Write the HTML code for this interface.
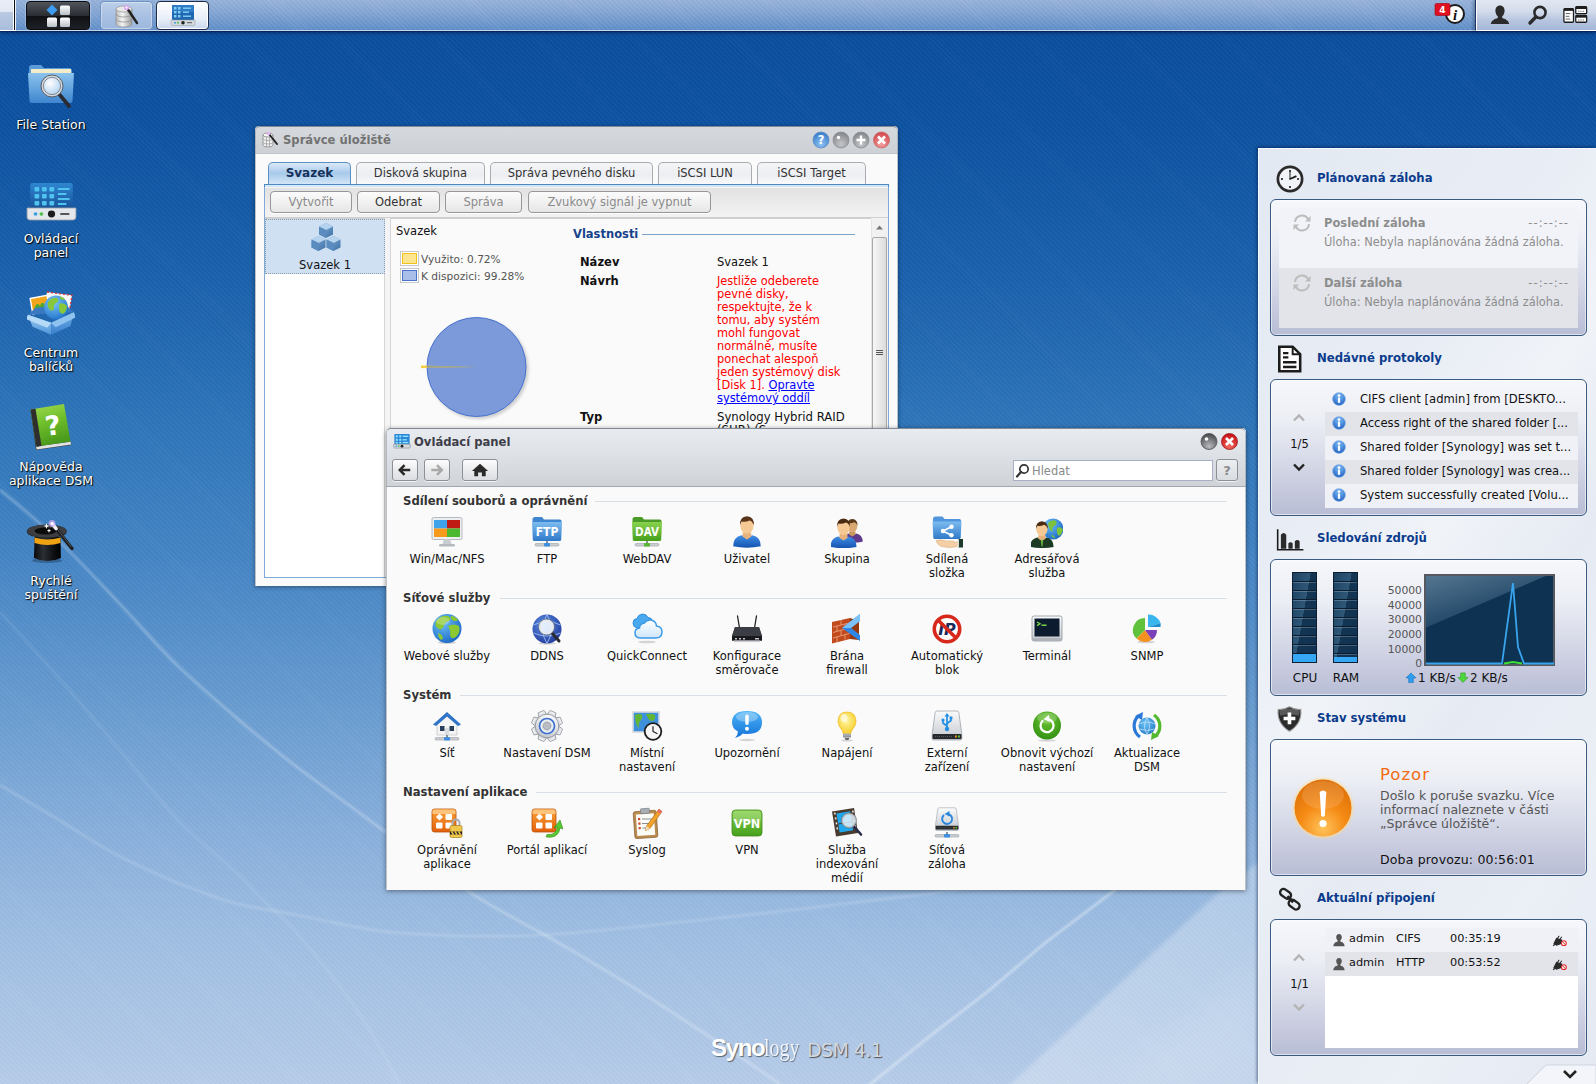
<!DOCTYPE html>
<html lang="cs"><head><meta charset="utf-8"><title>Synology DSM 4.1</title>
<style>
*{box-sizing:border-box;margin:0;padding:0}
html,body{width:1596px;height:1084px;overflow:hidden}
body{font-family:"DejaVu Sans","Liberation Sans",sans-serif;font-size:11.5px;color:#111;position:relative;
background:linear-gradient(180deg,#0a4c9c 0px,#0d52a1 120px,#1a61ad 280px,#2f76ba 430px,#4585c5 560px,#679bd0 700px,#86aedb 820px,#a0bfe3 940px,#b6cce9 1084px);}
.abs{position:absolute}
#stripes{left:0;top:0;width:1596px;height:1084px;background:repeating-linear-gradient(45deg,rgba(255,255,255,0.03) 0,rgba(255,255,255,0.03) 1.5px,rgba(0,0,0,0.015) 1.5px,rgba(0,0,0,0.015) 3.5px)}
#bgsvg{left:0;top:0}
/* taskbar */
#taskbar{left:0;top:0;width:1596px;height:31px;background:linear-gradient(180deg,#97b2da 0,#84a6d4 40%,#6c97cd 80%,#5f8fc8 100%);border-bottom:1px solid #c3d4ec;box-shadow:0 1px 0 #05265e,0 2px 3px rgba(0,20,70,.55)}
#tbstripes{left:0;top:0;width:1596px;height:30px;background:repeating-linear-gradient(45deg,rgba(255,255,255,0.05) 0,rgba(255,255,255,0.05) 1.5px,rgba(0,0,0,0.02) 1.5px,rgba(0,0,0,0.02) 3.5px)}
#tb-left{left:0;top:0;width:16px;height:31px;background:linear-gradient(180deg,#e8edf6 0,#e3e9f3 38%,#b9c9e2 42%,#a9bddc 100%);border-right:1px solid #eef3fa;border-bottom:1px solid #fff;box-shadow:inset -1px 0 0 #0a0d1c,inset -2px 0 0 #fff}
#tb-right{left:1475px;top:0;width:121px;height:31px;background:linear-gradient(180deg,#e2e8f2 0,#d4ddeb 35%,#b5c4df 70%,#a4b7d8 100%);border-left:1px solid #1c3560;border-bottom:1px solid #fff;box-shadow:inset 1px 0 0 #fff,-2px 0 3px rgba(0,20,60,.3)}
.tbbtn{top:1px;height:29px;border-radius:4px}
/* desktop icons */
.dicon{width:100px;text-align:center;color:#fff;font-size:12.5px;line-height:14px;text-shadow:1px 1px 1px #000,0 0 2px rgba(0,0,0,.6)}
/* windows */
.win{border-radius:5px 5px 0 0;box-shadow:0 1px 4px rgba(0,0,0,.4)}
.win::after{content:'';position:absolute;left:0;top:0;right:0;bottom:0;border:1px solid rgba(125,133,146,.95);border-bottom:none;border-left-color:rgba(150,157,168,.6);border-right-color:rgba(150,157,168,.6);border-radius:5px 5px 0 0;pointer-events:none}
.wtitle{left:0;top:0;right:0;height:28px;border-radius:4px 4px 0 0;font-weight:bold;font-size:11.600px}
.wb{width:17px;height:17px;border-radius:50%;top:5px}
</style></head><body>
<div id="stripes" class="abs"></div>
<svg id="bgsvg" class="abs" width="1596" height="1084" viewBox="0 0 1596 1084">
<defs><filter id="bl"><feGaussianBlur stdDeviation="1.2"/></filter><filter id="bl2"><feGaussianBlur stdDeviation="14"/></filter></defs>
<g fill="none" stroke="#fff" filter="url(#bl)">
<path d="M0,490 C10,498 39,522 59,541 C79,560 99,582 119,603 C139,624 158,647 178,666 C198,685 218,702 238,719 C258,736 277,752 297,767 C317,782 342,800 357,811 C372,822 366,818 386,832 C406,846 446,877 474,895 C502,913 526,924 552,939 C578,954 605,970 631,986 C657,1002 685,1021 710,1037 C735,1053 768,1076 780,1084" stroke-opacity=".3" stroke-width="2.400"/>
<path d="M0,785 C10,791 39,808 59,820 C79,832 99,846 119,856 C139,866 158,875 178,883 C198,891 218,899 238,904 C258,909 277,911 297,915 C317,919 340,924 357,927 C374,930 380,932 400,933 C420,934 447,936 474,936 C501,936 521,937 560,934 C599,931 662,924 710,919 C758,914 810,908 850,903 C890,898 905,897 947,891 C989,885 1074,869 1100,865" stroke-opacity=".2" stroke-width="2.200"/>
<path d="M0,612 C10,623 39,655 59,678 C79,701 99,725 119,749 C139,773 158,799 178,820 C198,841 223,860 238,874 C253,888 257,894 267,904 C277,914 282,915 297,933 C312,951 340,985 357,1010 C374,1035 393,1072 400,1084" stroke-opacity=".1" stroke-width="2.500"/>
</g>
<g filter="url(#bl2)" fill="#fff">
<path d="M1110,1084 L1260,960 L1260,1084Z" fill-opacity=".1"/>
</g>
<defs><linearGradient id="band" x1="0" y1="0" x2="1" y2="1"><stop offset="0" stop-color="#fff" stop-opacity=".36"/><stop offset="1" stop-color="#fff" stop-opacity=".15"/></linearGradient><filter id="bl3"><feGaussianBlur stdDeviation="2"/></filter></defs>
<path d="M1004,1090 L1218,893 L1300,830 L1300,1090Z" fill="url(#band)" filter="url(#bl3)"/>
<path d="M868,1086 L930,1036 L987,992 L1045,943 L1111,893 L1180,840" fill="none" stroke="#fff" stroke-opacity=".4" stroke-width="2.600" filter="url(#bl)"/>

</svg>
<!-- TASKBAR -->
<div id="taskbar" class="abs"></div><div id="tbstripes" class="abs"></div>
<div id="tb-left" class="abs"></div>
<div id="tb-right" class="abs"></div>
<div class="abs tbbtn" style="left:26px;width:64px;background:linear-gradient(180deg,#51555c 0,#2a2d32 50%,#0e1013 51%,#1d2025 100%);border:1px solid #0a0c10;box-shadow:0 0 0 1px rgba(255,255,255,.25)">
<svg class="abs" style="left:18px;top:2px" width="28" height="25" viewBox="0 0 28 25">
<defs><linearGradient id="wsq" x1="0" y1="0" x2="0" y2="1"><stop offset="0" stop-color="#fff"/><stop offset="1" stop-color="#b9c0c8"/></linearGradient></defs>
<path d="M7,0.5 L12.5,6 L7,11.5 L1.5,6Z" fill="#3d9cf0"/>
<rect x="15" y="1.5" width="10" height="9.5" rx="1.5" fill="url(#wsq)"/>
<rect x="2" y="13.5" width="10" height="9.5" rx="1.5" fill="url(#wsq)"/>
<rect x="15" y="13.5" width="10" height="9.5" rx="1.5" fill="url(#wsq)"/>
</svg></div>
<div class="abs tbbtn" style="left:100px;width:53px;background:linear-gradient(180deg,#bccfe9,#a9c1e3 50%,#9db8de);border:1px solid #6f93c4;box-shadow:inset 0 0 0 1px rgba(255,255,255,.35)">
<svg class="abs" style="left:12px;top:1px" width="28" height="26" viewBox="0 0 28 26">
<defs><linearGradient id="cyl" x1="0" y1="0" x2="1" y2="0"><stop offset="0" stop-color="#b9b9b9"/><stop offset=".4" stop-color="#f4f4f4"/><stop offset="1" stop-color="#9a9a9a"/></linearGradient></defs>
<path d="M3,6 v15 a8,3 0 0 0 16,0 v-15z" fill="url(#cyl)" stroke="#8a8a8a" stroke-width=".6"/>
<ellipse cx="11" cy="6" rx="8" ry="3" fill="#e9e9e9" stroke="#8a8a8a" stroke-width=".6"/>
<path d="M3,11 a8,3 0 0 0 16,0 M3,16 a8,3 0 0 0 16,0" fill="none" stroke="#8a8a8a" stroke-width=".7"/>
<path d="M14,5 L24,20" stroke="#222" stroke-width="2.4" stroke-linecap="round"/>
<circle cx="13.5" cy="4.5" r="2.6" fill="#d9a6f2"/><circle cx="13.5" cy="4.5" r="1.1" fill="#fff"/>
</svg></div>
<div class="abs tbbtn" style="left:156px;width:53px;background:linear-gradient(180deg,#fdfeff,#e9eff8 60%,#c9d8ee);border:1px solid #1c2c4a;box-shadow:inset 0 0 0 1px #fff">
<svg class="abs" style="left:13px;top:2px" width="26" height="24" viewBox="0 0 26 24">
<rect x="2" y="1" width="22" height="15" rx="1" fill="#1f67b0"/>
<rect x="2" y="1" width="22" height="7" rx="1" fill="#2f7cc4"/>
<g fill="#7fd0f5"><rect x="4" y="3" width="2.5" height="2.5"/><rect x="8" y="3" width="2.5" height="2.5"/><rect x="4" y="7" width="2.5" height="2.5"/><rect x="8" y="7" width="2.5" height="2.5"/><rect x="4" y="11" width="2.5" height="2.5"/><rect x="8" y="11" width="2.5" height="2.5"/><rect x="13" y="3.5" width="8" height="1.4"/><rect x="13" y="7.5" width="6" height="1.4"/><rect x="13" y="11.5" width="8" height="1.4"/></g>
<path d="M1,16 h24 v4 a1.5,1.5 0 0 1 -1.5,1.5 h-21 a1.5,1.5 0 0 1 -1.5,-1.5z" fill="#d5d9de" stroke="#8e959d" stroke-width=".5"/>
<circle cx="13" cy="18.7" r="1.8" fill="#222"/><circle cx="5" cy="18.7" r="1" fill="#3a9de0"/><circle cx="8" cy="18.7" r="1" fill="#4cc04c"/><rect x="17" y="18.2" width="5" height="1" fill="#555"/>
</svg></div>
<!-- notification -->
<svg class="abs" style="left:1434px;top:2px" width="36" height="26" viewBox="0 0 36 26">
<circle cx="21" cy="12" r="9" fill="#fff" stroke="#1b1b1b" stroke-width="2"/>
<text x="21" y="17.5" text-anchor="middle" font-family="Liberation Serif,serif" font-style="italic" font-weight="bold" font-size="15" fill="#111">i</text>
<rect x="1" y="1.5" width="15" height="12" rx="1.5" fill="#e01020" stroke="#a00010" stroke-width=".6"/>
<text x="8.5" y="10.6" text-anchor="middle" font-family="DejaVu Sans,sans-serif" font-weight="bold" font-size="9" fill="#fff">4</text>
</svg>
<!-- user -->
<svg class="abs" style="left:1488px;top:3px" width="24" height="24" viewBox="0 0 24 24"><path d="M12,2.5 c3,0 4.6,2.3 4.6,5.2 c0,2.4 -1.1,4.6 -2.4,5.6 v1.6 c3,1 6.3,2.2 7,6 h-18.4 c0.7,-3.8 4,-5 7,-6 v-1.6 c-1.300,-1 -2.400,-3.200 -2.400,-5.600 c0,-2.900 1.600,-5.200 4.600,-5.200z" fill="#2b2b2b"/></svg>
<!-- search -->
<svg class="abs" style="left:1526px;top:3px" width="24" height="24" viewBox="0 0 24 24"><circle cx="14" cy="9.500" r="5.600" fill="none" stroke="#2b2b2b" stroke-width="2.600"/><path d="M9.800,14 L4,20" stroke="#2b2b2b" stroke-width="3.400" stroke-linecap="round"/></svg>
<!-- widgets -->
<svg class="abs" style="left:1563px;top:5px" width="25.500" height="19" viewBox="0 0 28 20">
<rect x="1" y="3.500" width="10.500" height="15" rx="1" fill="#fff" stroke="#1d1d1d" stroke-width="1.400"/><rect x="1" y="3.500" width="10.500" height="2.500" fill="#1d1d1d"/>
<path d="M3,9 h5 M3,12 h4 M3,15 h5" stroke="#555" stroke-width="1"/>
<rect x="14" y="1.500" width="12" height="7.500" rx="1" fill="#fff" stroke="#1d1d1d" stroke-width="1.400"/><rect x="14" y="1.500" width="12" height="2.500" fill="#1d1d1d"/>
<rect x="14" y="11" width="12" height="7.500" rx="1" fill="#fff" stroke="#1d1d1d" stroke-width="1.400"/><rect x="14" y="11" width="12" height="2.500" fill="#1d1d1d"/>
<path d="M16.500,6.500 h7 M16.500,16 h7" stroke="#666" stroke-width="1" stroke-dasharray="1.500,1"/>
</svg>
<!-- DESKTOP ICONS -->
<svg class="abs" style="left:27px;top:60px" width="48" height="50" viewBox="0 0 48 50">
<defs><linearGradient id="fold" x1="0" y1="0" x2="0" y2="1"><stop offset="0" stop-color="#8cc3ee"/><stop offset="1" stop-color="#3f86cf"/></linearGradient>
<radialGradient id="lens" cx=".4" cy=".35" r=".7"><stop offset="0" stop-color="#fff"/><stop offset="1" stop-color="#a9cdee"/></radialGradient></defs>
<path d="M2,8 q0,-3 3,-3 h9 l3,3 h25 q3,0 3,3 v4 h-43z" fill="#5a9bd8"/>
<rect x="4" y="9" width="40" height="8" fill="#f3ecc8"/>
<path d="M1,13 h46 l-1.500,28 q-0.200,2 -2.200,2 h-38.600 q-2,0 -2.200,-2z" fill="url(#fold)"/>
<path d="M32,34 L42,46" stroke="#2a2a30" stroke-width="3.600" stroke-linecap="round"/>
<circle cx="25" cy="26" r="9.800" fill="url(#lens)" stroke="#d5dae0" stroke-width="2.600"/><circle cx="25" cy="26" r="11" fill="none" stroke="#4a4f58" stroke-width=".9"/><circle cx="25" cy="26" r="8.600" fill="none" stroke="#5a6470" stroke-width=".7"/>
</svg>
<div class="abs dicon" style="left:1px;top:118px">File Station</div>

<svg class="abs" style="left:26px;top:181px" width="51" height="40" viewBox="0 0 48 40" preserveAspectRatio="none">
<defs><linearGradient id="cps" x1="0" y1="0" x2="0" y2="1"><stop offset="0" stop-color="#2f86d0"/><stop offset="1" stop-color="#164f95"/></linearGradient></defs>
<rect x="4" y="2" width="40" height="27" rx="2" fill="url(#cps)"/>
<g fill="#4fc3ee"><rect x="8" y="6" width="4.500" height="4.500" rx="1"/><rect x="15" y="6" width="4.500" height="4.500" rx="1"/><rect x="22" y="6" width="4.500" height="4.500" rx="1"/><rect x="8" y="13" width="4.500" height="4.500" rx="1"/><rect x="15" y="13" width="4.500" height="4.500" rx="1"/><rect x="22" y="13" width="4.500" height="4.500" rx="1"/><rect x="8" y="20" width="4.500" height="4.500" rx="1"/><rect x="15" y="20" width="4.500" height="4.500" rx="1"/><rect x="22" y="20" width="4.500" height="4.500" rx="1"/>
<rect x="30" y="7" width="11" height="2"/><rect x="30" y="12" width="8" height="2"/><rect x="30" y="17" width="11" height="2"/><rect x="30" y="22" width="8" height="2"/></g>
<path d="M1,27 h46 v9 q0,3 -3,3 h-40 q-3,0 -3,-3z" fill="#e3e6ea" stroke="#9aa1a9" stroke-width=".8"/>
<circle cx="24" cy="33" r="3.400" fill="#1c1c1c"/><circle cx="9" cy="33" r="1.800" fill="#3a9de0"/><circle cx="14.500" cy="33" r="1.800" fill="#4cc04c"/><rect x="32" y="32" width="9" height="2" rx="1" fill="#555"/>
</svg>
<div class="abs dicon" style="left:1px;top:232px">Ovládací<br>panel</div>

<svg class="abs" style="left:27px;top:290px" width="48" height="48" viewBox="0 0 48 48">
<defs><linearGradient id="box" x1="0" y1="0" x2="0" y2="1"><stop offset="0" stop-color="#9ccdf4"/><stop offset="1" stop-color="#4f95da"/></linearGradient>
<linearGradient id="box2" x1="0" y1="0" x2="0" y2="1"><stop offset="0" stop-color="#6faee8"/><stop offset="1" stop-color="#3a7fcc"/></linearGradient>
<radialGradient id="pgl" cx=".4" cy=".3" r=".8"><stop offset="0" stop-color="#7cc8f6"/><stop offset="1" stop-color="#1a6cc8"/></radialGradient></defs>
<path d="M20,2 l25,3.300 l-2.500,15 l-25,-3.300z" fill="#f7f7f7"/><path d="M20,2 l25,3.300 l-2.500,15" fill="none" stroke="#d33" stroke-width="1.300" stroke-dasharray="2,2"/>
<path d="M3.200,8.500 l16.800,-3.200 l2.600,15.300 l-16.800,3.300z" fill="#f2a61c" stroke="#fff" stroke-width="1.400"/><path d="M7,19 q3,-8 6,-3 q2,-6 5,-1 l1,5.500 l-11,2z" fill="#4fa832"/>
<path d="M0.800,24.700 l8,-7 l30,-3 l8,7.600z" fill="#3a78c2"/>
<circle cx="29" cy="17.400" r="12" fill="url(#pgl)"/><path d="M21,12 q4,-5 9,-4 q3,3 -1,5 q-3,2 -2,6 q-2,3 -5,0 q-2,-3 -1,-7z M32,14 q5,-2 8,2 q0,5 -4,8 q-4,-1 -4,-5z M33,6.500 q3,0 5,3 q-3,1 -5,-1z" fill="#86c83a"/>
<path d="M0.800,24.700 l23.400,8 l0,12.100 l-18.600,-8z" fill="url(#box)"/>
<path d="M46.800,22.300 l-22.600,10.400 l0,12.100 l19.300,-8.800z" fill="url(#box2)"/>
<path d="M0.800,24.700 l23.400,8 l-4,5 l-21,-8.500z" fill="#b5dbf8"/><path d="M46.800,22.300 l-22.600,10.400 l4.500,4.500 l20.500,-10z" fill="#8ec3f0"/>
</svg>
<div class="abs dicon" style="left:1px;top:346px">Centrum<br>balíčků</div>

<svg class="abs" style="left:28px;top:403px" width="46" height="50" viewBox="0 0 46 50">
<defs><linearGradient id="bk" x1="0" y1="0" x2=".3" y2="1"><stop offset="0" stop-color="#a4dc52"/><stop offset=".5" stop-color="#6fbf2c"/><stop offset="1" stop-color="#4a9a1c"/></linearGradient></defs>
<path d="M2.500,6.500 l5.500,40.500 l35.500,-5 l-0.800,-3.500 l-31,4z" fill="#3a3a3a"/>
<path d="M8,43.500 l34.500,-4.800 l0.700,2.800 l-34.500,4.900z" fill="#e2e2e2"/>
<path d="M2.500,6.500 l33.500,-5.500 l6.500,37.500 l-34,5z" fill="url(#bk)"/>
<path d="M2.500,6.500 l5,-0.800 l6,37.300 l-5,0.700z" fill="#2e2e2e"/>
<text x="25" y="32" text-anchor="middle" font-family="DejaVu Sans,sans-serif" font-weight="bold" font-size="27" fill="#fff" transform="rotate(-8 25 22)">?</text>
</svg>
<div class="abs dicon" style="left:1px;top:460px">Nápověda<br>aplikace DSM</div>

<svg class="abs" style="left:25px;top:518px" width="52" height="50" viewBox="0 0 52 50">
<defs><linearGradient id="hat" x1="0" y1="0" x2="1" y2="0"><stop offset="0" stop-color="#0a0a0a"/><stop offset=".35" stop-color="#2c2f36"/><stop offset=".7" stop-color="#101114"/><stop offset="1" stop-color="#000"/></linearGradient></defs>
<ellipse cx="22" cy="42.500" rx="15" ry="2.500" fill="#000" fill-opacity=".25"/>
<path d="M9.700,19 h25.700 l0.500,21 q-13,6 -27,0z" fill="url(#hat)"/>
<path d="M9.600,19.500 q12.500,4 25.800,0 l0.100,5.500 q-13,4 -26,0z" fill="#f0a312"/>
<ellipse cx="21.800" cy="13.400" rx="20" ry="7" fill="#2a2b2e"/><ellipse cx="21.800" cy="13" rx="19.500" ry="6.300" fill="#3c3d41"/>
<ellipse cx="20.500" cy="13" rx="11" ry="3.500" fill="#0b0b0c"/>
<path d="M29,8 L47,30.500" stroke="#1c1c1e" stroke-width="3.400" stroke-linecap="round"/><path d="M30.500,9 L46,28.500" stroke="#55565a" stroke-width="1" stroke-linecap="round"/>
<path d="M27.500,6 L31,10.500" stroke="#f4f0fa" stroke-width="3.600" stroke-linecap="round"/>
<circle cx="27" cy="5.500" r="3.500" fill="#d9b0f5" fill-opacity=".7"/><circle cx="27" cy="5.500" r="1.500" fill="#fff"/>
<path d="M21.500,5 l0.800,2.200 l2.200,0.800 l-2.200,0.800 l-0.800,2.200 l-0.800,-2.200 l-2.200,-0.800 l2.200,-0.800z M24,10.500 l0.600,1.600 l1.600,0.600 l-1.600,0.600 l-0.600,1.600 l-0.600,-1.600 l-1.600,-0.600 l1.600,-0.600z" fill="#fff"/>
</svg>
<div class="abs dicon" style="left:1px;top:574px">Rychlé<br>spuštění</div>
<!-- WINDOW 1: Správce úložiště -->
<div class="abs win" id="w1" style="left:255px;top:126px;width:643px;height:460px;background:#fafafa">
<div class="abs wtitle" style="background:linear-gradient(180deg,#d6d9dd,#cdd1d5);border-bottom:1px solid #c0c4c9">
<svg class="abs" style="left:6px;top:5px" width="18" height="18" viewBox="0 0 18 18">
<path d="M2,4 v10 a5,2 0 0 0 10,0 v-10z" fill="#eee" stroke="#888" stroke-width=".8"/><ellipse cx="7" cy="4" rx="5" ry="2" fill="#f6f6f6" stroke="#888" stroke-width=".8"/>
<path d="M2,7.500 a5,2 0 0 0 10,0 M2,11 a5,2 0 0 0 10,0 M5.500,6 v10 M8.500,6 v10" fill="none" stroke="#999" stroke-width=".7"/>
<path d="M8,3 L16,13" stroke="#222" stroke-width="2" stroke-linecap="round"/><circle cx="7.500" cy="2.500" r="1.800" fill="#e2b3f5"/>
</svg>
<div class="abs" style="left:28px;top:7px;color:#727272;white-space:nowrap">Správce úložiště</div>
<svg class="abs" style="left:556px;top:4px" width="82" height="20" viewBox="0 0 82 20">
<defs>
<radialGradient id="gb" cx=".5" cy=".75" r=".7"><stop offset="0" stop-color="#8ec2f2"/><stop offset="1" stop-color="#3b7fca"/></radialGradient>
<radialGradient id="gg" cx=".5" cy=".75" r=".7"><stop offset="0" stop-color="#c4c6c9"/><stop offset="1" stop-color="#85888c"/></radialGradient>
<radialGradient id="gr" cx=".5" cy=".75" r=".7"><stop offset="0" stop-color="#f0a3a3"/><stop offset="1" stop-color="#d4484c"/></radialGradient>
</defs>
<circle cx="10" cy="10" r="8" fill="url(#gb)" stroke="#5f8fc6" stroke-width=".8"/>
<text x="10" y="14.200" text-anchor="middle" font-family="DejaVu Sans,sans-serif" font-weight="bold" font-size="11.500" fill="#fff">?</text>
<circle cx="30" cy="10" r="8" fill="url(#gg)" stroke="#8c8f93" stroke-width=".8"/><circle cx="27.500" cy="7.500" r="1.700" fill="#fff"/>
<circle cx="50" cy="10" r="8" fill="url(#gg)" stroke="#8c8f93" stroke-width=".8"/><path d="M50,5.500 v9 M45.500,10 h9" stroke="#fff" stroke-width="2.400"/>
<circle cx="70.500" cy="10" r="8" fill="url(#gr)" stroke="#c96a6c" stroke-width=".8"/><path d="M67,6.500 l7,7 M74,6.500 l-7,7" stroke="#fff" stroke-width="2.600"/>
</svg>
</div>
<!-- tabs -->
<style>
.tab{top:36px;height:23px;border:1px solid #a9adb3;border-bottom:none;border-radius:5px 5px 0 0;background:linear-gradient(180deg,#f4f5f7,#eceef2 55%,#fbfbfc);text-align:center;line-height:20px;color:#333;font-size:11.500px;white-space:nowrap}
.tbtn{top:65px;height:22px;border:1px solid #979797;border-radius:4px;background:linear-gradient(180deg,#fbfbfb,#f1f1f1 50%,#e6e6e6);text-align:center;line-height:20px;color:#8a8a8a;font-size:11.500px;white-space:nowrap;box-shadow:0 1px 0 #fff}
</style>
<div class="abs tab" style="left:13px;width:83px;border-color:#5b8fc4;background:linear-gradient(180deg,#dbe9f7 0,#a7c9ea 45%,#bfd9f1 70%,#dcebf9 100%);font-weight:bold;color:#15315c;font-size:12px;height:24px">Svazek</div>
<div class="abs tab" style="left:101px;width:129px">Disková skupina</div>
<div class="abs tab" style="left:235px;width:163px">Správa pevného disku</div>
<div class="abs tab" style="left:403px;width:94px">iSCSI LUN</div>
<div class="abs tab" style="left:502px;width:109px">iSCSI Target</div>
<div class="abs" style="left:9px;top:58px;width:625px;height:4px;background:#d3e6f8;border:1px solid #4e88c2;border-bottom-color:#3f79b4"></div>
<div class="abs" style="left:13px;top:59px;width:82px;height:1px;background:#dcebf9"></div>
<!-- frame -->
<div class="abs" style="left:9px;top:61px;width:625px;height:391px;border:1px solid #7fa9d6;border-top:none;background:#f4f4f4"></div>
<!-- toolbar -->
<div class="abs" style="left:10px;top:62px;width:623px;height:30px;background:linear-gradient(180deg,#e2e2e2,#f3f3f3);border-bottom:1px solid #cfcfcf"></div>
<div class="abs tbtn" style="left:15px;width:82px">Vytvořit</div>
<div class="abs tbtn" style="left:102px;width:83px;color:#333">Odebrat</div>
<div class="abs tbtn" style="left:190px;width:77px">Správa</div>
<div class="abs tbtn" style="left:273px;width:183px">Zvukový signál je vypnut</div>
<!-- left panel -->
<div class="abs" style="left:10px;top:92px;width:120px;height:359px;background:#fff;border-right:1px solid #d5d5d5;border-top:1px solid #d0d0d0"></div>
<div class="abs" style="left:10px;top:93px;width:120px;height:55px;background:#cfe0f3;border:1px dotted #8a9bb0"></div>
<svg class="abs" style="left:55px;top:96px" width="32" height="32" viewBox="0 0 32 32">
<defs><linearGradient id="cb1" x1="0" y1="0" x2="1" y2="1"><stop offset="0" stop-color="#86b4de"/><stop offset="1" stop-color="#3f6fa6"/></linearGradient></defs>
<g id="cube"><path d="M16,1 l7,3.500 v8 l-7,3.500 l-7,-3.500 v-8z" fill="url(#cb1)"/><path d="M16,1 l7,3.500 l-7,3.500 l-7,-3.500z" fill="#b5d3ee"/><path d="M16,8 v8 l-7,-3.500 v-8z" fill="#5a8cc0"/></g>
<g transform="translate(-7.500,13)"><path d="M16,1 l7,3.500 v8 l-7,3.500 l-7,-3.500 v-8z" fill="url(#cb1)"/><path d="M16,1 l7,3.500 l-7,3.500 l-7,-3.500z" fill="#b5d3ee"/><path d="M16,8 v8 l-7,-3.500 v-8z" fill="#5a8cc0"/></g>
<g transform="translate(7.500,13)"><path d="M16,1 l7,3.500 v8 l-7,3.500 l-7,-3.500 v-8z" fill="url(#cb1)"/><path d="M16,1 l7,3.500 l-7,3.500 l-7,-3.500z" fill="#b5d3ee"/><path d="M16,8 v8 l-7,-3.500 v-8z" fill="#5a8cc0"/></g>
</svg>
<div class="abs" style="left:10px;top:132px;width:120px;text-align:center;font-size:11.500px">Svazek 1</div>
<!-- main panel -->
<div class="abs" style="left:135px;top:92px;width:481px;height:359px;background:#fafafa;border-left:1px solid #d5d5d5;border-top:1px solid #d0d0d0"></div>
<div class="abs" style="left:141px;top:98px;font-size:11.500px">Svazek</div>
<div class="abs" style="left:145px;top:125px;width:19px;height:15px;border:1px solid #c9c9c9;background:#fff"><div style="margin:1px;height:11px;background:#fde58f;border:1px solid #f2c21c"></div></div>
<div class="abs" style="left:145px;top:142px;width:19px;height:15px;border:1px solid #c9c9c9;background:#fff"><div style="margin:1px;height:11px;background:#a9bfea;border:1px solid #4a74cc"></div></div>
<div class="abs" style="left:166px;top:127px;font-size:10.600px;color:#555;white-space:nowrap">Využito: 0.72%</div>
<div class="abs" style="left:166px;top:144px;font-size:10.600px;color:#555;white-space:nowrap">K dispozici: 99.28%</div>
<svg class="abs" style="left:155px;top:180px" width="130" height="125" viewBox="0 0 130 125">
<defs><filter id="psh"><feGaussianBlur stdDeviation="1.500"/></filter></defs>
<circle cx="68.500" cy="63" r="50" fill="#000" fill-opacity=".18" filter="url(#psh)"/>
<circle cx="66.500" cy="61" r="49.500" fill="#7c9ad9" stroke="#4872cf" stroke-width="1"/>
<path d="M11,59.500 L66.500,61 L17,61.800 L11,62.300z" fill="#f3cf3f"/>
<path d="M17,60 L66.500,61 L17,61.600" fill="#4a74cc" fill-opacity=".6"/>
</svg>
<!-- properties -->
<div class="abs" style="left:318px;top:101px;font-weight:bold;color:#15428b;font-size:11.500px">Vlastnosti</div>
<div class="abs" style="left:387px;top:108px;width:213px;height:1px;background:#7ba3c6"></div>
<div class="abs" style="left:325px;top:129px;font-weight:bold;font-size:11.500px">Název</div>
<div class="abs" style="left:462px;top:129px;font-size:11.500px">Svazek 1</div>
<div class="abs" style="left:325px;top:148px;font-weight:bold;font-size:11.500px">Návrh</div>
<div class="abs" style="left:462px;top:149px;width:160px;font-size:11.400px;line-height:13px;color:#ff0000;white-space:nowrap">Jestliže odeberete<br>pevné disky,<br>respektujte, že k<br>tomu, aby systém<br>mohl fungovat<br>normálně, musíte<br>ponechat alespoň<br>jeden systémový disk<br>[Disk 1]. <span style="color:#0000ff;text-decoration:underline">Opravte<br>systémový oddíl</span></div>
<div class="abs" style="left:325px;top:284px;font-weight:bold;font-size:11.500px">Typ</div>
<div class="abs" style="left:462px;top:285px;width:160px;font-size:11.700px;line-height:13px">Synology Hybrid RAID (SHR) (S</div>
<!-- scrollbar -->
<div class="abs" style="left:616px;top:93px;width:17px;height:358px;background:#f1f1f1;border-left:1px solid #e4e4e4"></div>
<svg class="abs" style="left:616px;top:93px" width="17" height="17" viewBox="0 0 17 17"><path d="M5,10.500 L8.500,6.500 L12,10.500z" fill="#777"/></svg>
<div class="abs" style="left:617px;top:111px;width:15px;height:340px;border:1px solid #a8a8a8;border-radius:2px;background:linear-gradient(90deg,#f6f6f6,#dcdcdc)"></div>
<div class="abs" style="left:621px;top:224px;width:7px;height:1px;background:#555;box-shadow:0 2px 0 #555,0 4px 0 #555"></div>
</div>
<svg width="0" height="0" style="position:absolute"><defs>
<linearGradient id="gFb" x1="0" y1="0" x2="0" y2="1"><stop offset="0" stop-color="#7dbcf0"/><stop offset="1" stop-color="#2f79c8"/></linearGradient>
<linearGradient id="gFg" x1="0" y1="0" x2="0" y2="1"><stop offset="0" stop-color="#8ad24e"/><stop offset="1" stop-color="#45a01c"/></linearGradient>
<linearGradient id="gSh" x1="0" y1="0" x2="0" y2="1"><stop offset="0" stop-color="#3f8fe6"/><stop offset="1" stop-color="#1552b0"/></linearGradient>
<radialGradient id="gGl" cx=".35" cy=".3" r=".8"><stop offset="0" stop-color="#6cc0f5"/><stop offset="1" stop-color="#1763c2"/></radialGradient>
<radialGradient id="gGd" cx=".4" cy=".35" r=".8"><stop offset="0" stop-color="#5c8fe8"/><stop offset="1" stop-color="#1a2f8f"/></radialGradient>
<radialGradient id="gGd2" cx=".4" cy=".35" r=".8"><stop offset="0" stop-color="#6cc6f5"/><stop offset="1" stop-color="#1c6fc0"/></radialGradient>
<linearGradient id="gCl" x1="0" y1="0" x2="0" y2="1"><stop offset="0" stop-color="#ffffff"/><stop offset="1" stop-color="#cfe6fa"/></linearGradient>
<linearGradient id="gSv" x1="0" y1="0" x2="0" y2="1"><stop offset="0" stop-color="#fafbfc"/><stop offset="1" stop-color="#c3c7cd"/></linearGradient>
<linearGradient id="gNb" x1="0" y1="0" x2="0" y2="1"><stop offset="0" stop-color="#4fb4f7"/><stop offset="1" stop-color="#1272d8"/></linearGradient>
<radialGradient id="gBu" cx=".45" cy=".4" r=".7"><stop offset="0" stop-color="#fff7a8"/><stop offset="1" stop-color="#f5c818"/></radialGradient>
<radialGradient id="gGr" cx=".5" cy=".3" r=".8"><stop offset="0" stop-color="#6cc430"/><stop offset="1" stop-color="#2a8a10"/></radialGradient>
<linearGradient id="gOr" x1="0" y1="0" x2="0" y2="1"><stop offset="0" stop-color="#fba43a"/><stop offset="1" stop-color="#e2600c"/></linearGradient>
</defs></svg>
<!-- WINDOW 2: Ovládací panel -->
<div class="abs win" id="w2" style="left:386px;top:428px;width:860px;height:462px;background:#fafafa;box-shadow:0 1px 5px rgba(0,0,0,.45)">
<div class="abs wtitle" style="background:linear-gradient(180deg,#e8ebef,#dde1e6)">
<svg class="abs" style="left:7px;top:5px" width="18" height="17" viewBox="0 0 26 24">
<rect x="2" y="1" width="22" height="15" rx="1" fill="#2a86d6"/><g fill="#8fe0ff"><rect x="4" y="3" width="3" height="3"/><rect x="9" y="3" width="3" height="3"/><rect x="4" y="8" width="3" height="3"/><rect x="9" y="8" width="3" height="3"/><rect x="14" y="3.500" width="8" height="2"/><rect x="14" y="8.500" width="6" height="2"/><rect x="4" y="12.500" width="3" height="2.500"/><rect x="9" y="12.500" width="3" height="2.500"/><rect x="14" y="12.500" width="8" height="2"/></g>
<path d="M1,16 h24 v4 a1.500,1.500 0 0 1 -1.500,1.500 h-21 a1.500,1.500 0 0 1 -1.500,-1.500z" fill="#d5d9de" stroke="#7e858d" stroke-width=".8"/><circle cx="13" cy="18.700" r="2" fill="#222"/><circle cx="5" cy="18.700" r="1.200" fill="#3a9de0"/><circle cx="8.500" cy="18.700" r="1.200" fill="#4cc04c"/>
</svg>
<div class="abs" style="left:28px;top:7px;color:#3d3d48;white-space:nowrap">Ovládací panel</div>
<svg class="abs" style="left:813px;top:4px" width="42" height="20" viewBox="0 0 42 20">
<defs><radialGradient id="gk" cx=".5" cy=".8" r=".75"><stop offset="0" stop-color="#b9bbbe"/><stop offset="1" stop-color="#4a4c50"/></radialGradient>
<radialGradient id="gR" cx=".5" cy=".8" r=".75"><stop offset="0" stop-color="#f06a5e"/><stop offset="1" stop-color="#c8121a"/></radialGradient></defs>
<circle cx="10" cy="9.500" r="8" fill="url(#gk)" stroke="#4e5054" stroke-width=".8"/><circle cx="7.500" cy="7" r="1.800" fill="#fff"/>
<circle cx="30.500" cy="9.500" r="8" fill="url(#gR)" stroke="#9c1a1e" stroke-width=".8"/><path d="M27,6 l7,7 M34,6 l-7,7" stroke="#fff" stroke-width="2.600"/>
</svg></div>
<div class="abs" style="left:0;top:28px;width:860px;height:31px;background:linear-gradient(180deg,#dde0e4,#cfd3d8);border-bottom:1px solid #a3a8af"></div>
<style>.nb{top:31px;height:22px;border:1px solid #8d9096;border-radius:3px;background:linear-gradient(180deg,#fdfdfd,#e9eaec 55%,#dcdee1);box-shadow:0 1px 0 rgba(255,255,255,.7)}
.cph{font-weight:bold;color:#333;font-size:11.650px;white-space:nowrap;left:17px}
.cpl{height:1px;background:#d9dfe6}
.cpt{width:120px;text-align:center;font-size:11.500px;line-height:14px;color:#111}</style>
<div class="abs nb" style="left:6px;width:26px"><svg width="24" height="20" viewBox="0 0 23 21"><path d="M17,10.500 h-10 M11,5.500 l-5,5 l5,5" fill="none" stroke="#2a2a2a" stroke-width="2.600"/></svg></div>
<div class="abs nb" style="left:38px;width:26px"><svg width="24" height="20" viewBox="0 0 24 21"><path d="M6,10.500 h10 M12,5.500 l5,5 l-5,5" fill="none" stroke="#a9a9a9" stroke-width="2.600"/></svg></div>
<div class="abs nb" style="left:76px;width:36px"><svg width="34" height="20" viewBox="0 0 34 21"><path d="M17,4 L8.500,11.500 h2.500 v5.500 h4 v-4 h4 v4 h4 v-5.500 h2.500z" fill="#2a2a2a"/></svg></div>
<div class="abs" style="left:627px;top:32px;width:200px;height:21px;background:#fff;border:1px solid #a9b0c6;"></div>
<svg class="abs" style="left:629px;top:35px" width="16" height="16" viewBox="0 0 16 16"><circle cx="9" cy="6" r="4.200" fill="none" stroke="#333" stroke-width="1.700"/><path d="M6,9 L2,13.500" stroke="#333" stroke-width="2.200" stroke-linecap="round"/></svg>
<div class="abs" style="left:646px;top:36px;color:#8a8a8a;font-size:11.500px">Hledat</div>
<div class="abs nb" style="left:830px;top:31px;width:22px;height:22px;text-align:center;font-weight:bold;color:#8a8a8a;font-size:13px;line-height:21px;background:linear-gradient(180deg,#eceef0,#d9dce0)">?</div>

<div class="abs cph" style="top:66px">Sdílení souborů a oprávnění</div>
<div class="abs cpl" style="left:209px;top:73px;width:632px"></div>
<svg class="abs" style="left:45px;top:88px" width="32" height="32" viewBox="0 0 32 32"><rect x="1" y="1.500" width="30" height="22" rx="1.500" fill="#eceef1" stroke="#a7acb3" stroke-width=".8"/>
<rect x="3" y="4" width="13" height="8.500" fill="#3fa3ea"/><rect x="16" y="4" width="13" height="8.500" fill="#c01a14"/><rect x="3" y="12.500" width="13" height="8.500" fill="#f59a1b"/><rect x="16" y="12.500" width="13" height="8.500" fill="#4bb82f"/>
<path d="M13,23 h6 l1.500,5 h-9z" fill="#c9ccd1"/><rect x="8" y="28" width="16" height="2.500" rx="1.200" fill="#b5b9bf"/></svg>
<div class="abs cpt" style="left:1px;top:124px">Win/Mac/NFS</div>
<svg class="abs" style="left:145px;top:88px" width="32" height="32" viewBox="0 0 32 32"><path d="M1.500,3.500 q0,-2.500 2.500,-2.500 h7 l2,2.500 h16 q1.500,0 1.500,1.500 v3 h-29z" fill="#3f86d0"/>
<path d="M1,6 h30 l-0.800,17.500 q-0.100,1.500 -1.600,1.500 h-25.200 q-1.500,0 -1.600,-1.500z" fill="url(#gFb)"/>
<text x="16" y="20" text-anchor="middle" font-family="DejaVu Sans Condensed,DejaVu Sans,sans-serif" font-weight="bold" font-size="12" fill="#fff">FTP</text><path d="M16,25 v3" stroke="#8a8f96" stroke-width="2"/><rect x="4" y="27.500" width="24" height="2.600" rx="1.300" fill="#c9cdd2" stroke="#8f959c" stroke-width=".5"/><rect x="13" y="27" width="6" height="3.600" rx="1" fill="#3f8ee0"/></svg>
<div class="abs cpt" style="left:101px;top:124px">FTP</div>
<svg class="abs" style="left:245px;top:88px" width="32" height="32" viewBox="0 0 32 32"><path d="M1.500,3.500 q0,-2.500 2.500,-2.500 h7 l2,2.500 h16 q1.500,0 1.500,1.500 v3 h-29z" fill="#4a9a28"/>
<path d="M1,6 h30 l-0.800,17.500 q-0.100,1.500 -1.600,1.500 h-25.200 q-1.500,0 -1.600,-1.500z" fill="url(#gFg)"/>
<text x="16" y="20" text-anchor="middle" font-family="DejaVu Sans Condensed,DejaVu Sans,sans-serif" font-weight="bold" font-size="11.500" fill="#fff">DAV</text><path d="M16,25 v3" stroke="#8a8f96" stroke-width="2"/><rect x="4" y="27.500" width="24" height="2.600" rx="1.300" fill="#c9cdd2" stroke="#8f959c" stroke-width=".5"/><rect x="13" y="27" width="6" height="3.600" rx="1" fill="#58b531"/></svg>
<div class="abs cpt" style="left:201px;top:124px">WebDAV</div>
<svg class="abs" style="left:345px;top:88px" width="32" height="32" viewBox="0 0 32 32"><g transform="translate(-1,-2.5) scale(1.06)"><path d="M3,31 q0,-9 8,-10.500 l5,2 l5,-2 q8,1.500 8,10.500 q-13,2.500 -26,0z" fill="url(#gSh)"/>
<path d="M12,18 h8 v4 l-4,2.500 l-4,-2.500z" fill="#e8b27d"/>
<ellipse cx="16" cy="11.500" rx="6.200" ry="7.500" fill="#f6c994"/>
<path d="M9.500,11 q-0.500,-8 6.500,-8.500 q7,0.500 6.500,8.500 q-1.500,-4 -4,-4.500 q-4,2 -7.500,1 q-1,1.500 -1.500,3.500z" fill="#5a3418"/></g></svg>
<div class="abs cpt" style="left:301px;top:124px">Uživatel</div>
<svg class="abs" style="left:445px;top:88px" width="32" height="32" viewBox="0 0 32 32"><g transform="translate(8.5,1) scale(0.8)"><path d="M3,31 q0,-9 8,-10.500 l5,2 l5,-2 q8,1.500 8,10.500 q-13,2.500 -26,0z" fill="#5f3a8c"/>
<path d="M12,18 h8 v4 l-4,2.500 l-4,-2.500z" fill="#c99860"/>
<ellipse cx="16" cy="11.500" rx="6.200" ry="7.500" fill="#d9a870"/>
<path d="M9.500,11 q-0.500,-8 6.500,-8.500 q7,0.500 6.500,8.500 q-1.500,-4 -4,-4.500 q-4,2 -7.500,1 q-1,1.500 -1.500,3.500z" fill="#5a3a1a"/></g><g transform="translate(-3.5,0) scale(1.0)"><path d="M3,31 q0,-9 8,-10.500 l5,2 l5,-2 q8,1.500 8,10.500 q-13,2.500 -26,0z" fill="url(#gSh)"/>
<path d="M12,18 h8 v4 l-4,2.500 l-4,-2.500z" fill="#e8b27d"/>
<ellipse cx="16" cy="11.500" rx="6.200" ry="7.500" fill="#f6c994"/>
<path d="M9.500,11 q-0.500,-8 6.500,-8.500 q7,0.500 6.500,8.500 q-1.500,-4 -4,-4.500 q-4,2 -7.500,1 q-1,1.500 -1.500,3.500z" fill="#4a2a12"/></g></svg>
<div class="abs cpt" style="left:401px;top:124px">Skupina</div>
<svg class="abs" style="left:545px;top:88px" width="32" height="32" viewBox="0 0 32 32"><path d="M2,3 q0,-2.500 2.500,-2.500 h7 l2,2.500 h15 q1.500,0 1.500,1.500 v3 h-28z" fill="#4f96dc"/>
<path d="M1.500,5.500 h29 l-0.800,16 q-0.100,1.500 -1.600,1.500 h-24.200 q-1.500,0 -1.600,-1.500z" fill="url(#gFb)"/>
<g fill="#fff" stroke="#fff"><path d="M12,15 l8,-4 M12,15 l8,4" stroke-width="1.600" fill="none"/><circle cx="12" cy="15" r="2.200" stroke="none"/><circle cx="20.500" cy="10.800" r="2.200" stroke="none"/><circle cx="20.500" cy="19.200" r="2.200" stroke="none"/></g>
<path d="M5,24.500 q5,-1.500 10,0.500 h7 q2,0 1.500,1.800 l4.500,-1.800 v5 q-9,3 -18,0.300 q-4,-2 -5,-5.800z" fill="#f4cfa6" stroke="#d9a878" stroke-width=".5"/><rect x="27.500" y="23" width="4.500" height="8.500" fill="#1c3a2a"/><rect x="26.600" y="23.500" width="1.200" height="7.500" fill="#e9eef2"/></svg>
<div class="abs cpt" style="left:501px;top:124px">Sdílená<br>složka</div>
<svg class="abs" style="left:645px;top:88px" width="32" height="32" viewBox="0 0 32 32"><circle cx="22" cy="13" r="10.500" fill="url(#gGl)"/><path d="M17,7 q4,-4 8,-2 q2,3 -2,5 q-3,2 -1,6 q-4,-1 -5,-9z M26,12 q4,-2 6,2 q-1,4 -4,6 q-3,-3 -2,-8z M20,19 q3,0 4,3 q-2,1 -4,-3z" fill="#7cc23a"/><g transform="translate(-3.5,3) scale(0.9)"><path d="M3,31 q0,-9 8,-10.500 l5,2 l5,-2 q8,1.500 8,10.500 q-13,2.500 -26,0z" fill="#1c3a22"/>
<path d="M12,18 h8 v4 l-4,2.500 l-4,-2.500z" fill="#e8b27d"/>
<ellipse cx="16" cy="11.500" rx="6.200" ry="7.500" fill="#f6c994"/>
<path d="M9.500,11 q-0.500,-8 6.500,-8.500 q7,0.500 6.500,8.500 q-1.500,-4 -4,-4.500 q-4,2 -7.500,1 q-1,1.500 -1.500,3.500z" fill="#4a2a12"/></g><path d="M10,24.500 l1,-1 l1,1 l-0.500,6 h-1z" fill="#6fc04a"/></svg>
<div class="abs cpt" style="left:601px;top:124px">Adresářová<br>služba</div>
<div class="abs cph" style="top:163px">Síťové služby</div>
<div class="abs cpl" style="left:114px;top:170px;width:727px"></div>
<svg class="abs" style="left:45px;top:185px" width="32" height="32" viewBox="0 0 32 32"><ellipse cx="16" cy="29.500" rx="9" ry="1.500" fill="#000" fill-opacity=".18"/><circle cx="16" cy="15.500" r="14.500" fill="url(#gGl)"/>
<path d="M5,8 q5,-6 12,-5 q4,2 1,5 q-4,1 -5,4 q-1,5 -5,4 q-5,-3 -3,-8z M17,13 q6,-3 11,0 q2,6 -3,11 q-5,3 -6,-2 q1,-4 -2,-9z M7,20 q4,1 5,5 q-1,3 -3,1 q-2,-2 -2,-6z M20,3 q4,0 7,4 q-3,2 -6,0 q-2,-2 -1,-4z" fill="#8cc832"/>
<ellipse cx="12" cy="8" rx="7" ry="4" fill="#fff" fill-opacity=".25"/></svg>
<div class="abs cpt" style="left:1px;top:221px">Webové služby</div>
<svg class="abs" style="left:145px;top:185px" width="32" height="32" viewBox="0 0 32 32"><ellipse cx="16" cy="30.500" rx="9" ry="1.200" fill="#000" fill-opacity=".15"/><circle cx="16" cy="16" r="14.500" fill="url(#gGd)"/><path d="M2.500,12 q13.500,-7 27,0 M2.500,20 q13.500,6 27,0 M16,1.500 q-9,14.500 0,29 M16,1.500 q9,14.500 0,29" stroke="#9fc0f0" stroke-width=".9" fill="none"/>
<path d="M21,20 L28,28" stroke="#2a2a33" stroke-width="3" stroke-linecap="round"/><circle cx="15.500" cy="14" r="7" fill="#eef5fd" fill-opacity=".92" stroke="#e6eaef" stroke-width="2"/><circle cx="15.500" cy="14" r="8" fill="none" stroke="#56606c" stroke-width=".7"/></svg>
<div class="abs cpt" style="left:101px;top:221px">DDNS</div>
<svg class="abs" style="left:245px;top:185px" width="32" height="32" viewBox="0 0 32 32"><ellipse cx="16" cy="29" rx="9" ry="1.300" fill="#000" fill-opacity=".15"/><path d="M6,15 q-4,-1 -4,-5 q0,-4 4,-4.500 q1,-4 5.500,-4.500 q4,0 5.500,3.500 q4,0 4.500,4 l-10,8z" fill="#4aa8ee" stroke="#2f8ede" stroke-width="1"/><path d="M10,25 q-6,0 -6,-5 q0,-4.500 4.500,-5 q0.500,-4.500 5,-5 q2,-3.500 6.500,-3 q5,1 5.500,6 q5.500,0.500 5.500,6 q0,6 -6.500,6z" fill="url(#gCl)" stroke="#3c9be6" stroke-width="1.500"/></svg>
<div class="abs cpt" style="left:201px;top:221px">QuickConnect</div>
<svg class="abs" style="left:345px;top:185px" width="32" height="32" viewBox="0 0 32 32"><path d="M6.500,3 l2,12 M25.500,3 l-2,12" stroke="#222" stroke-width="1.300" stroke-linecap="round"/>
<path d="M4,14 h24 l3,9 v4.500 h-30 v-4.500z" fill="#2a2d31"/><path d="M4,14 h24 l3,9 h-30z" fill="#3a3e44"/><rect x="1" y="23" width="30" height="4.500" fill="#17191c"/>
<rect x="3" y="27.500" width="26" height="1.600" fill="#c8ccd1"/><g fill="#f2f2f2"><rect x="4" y="25.200" width="2" height="1.200"/><rect x="8" y="25.200" width="2" height="1.200"/><rect x="12" y="25.200" width="2" height="1.200"/><rect x="24" y="25.200" width="4" height="1.200"/></g></svg>
<div class="abs cpt" style="left:301px;top:221px">Konfigurace<br>směrovače</div>
<svg class="abs" style="left:445px;top:185px" width="32" height="32" viewBox="0 0 32 32"><path d="M1,9 l18,-4 v21 l-18,4.500z" fill="#c24a1c"/><path d="M19,5 l9,3 v19 l-9,-1z" fill="#96380f"/>
<path d="M2,14 l16,-4 M2,19.500 l16,-4.500 M2,25 l16,-4.500 M10,7 v5 M6,13 v5.500 M14,11 v5 M10,17.500 v5 M6,24 v5 M14,22 v4.500" stroke="#e9a07c" stroke-width=".9" fill="none"/>
<path d="M29,1 L11,15 L29,28 L29,22 L20,15 L29,8z" fill="#2f86e6"/><path d="M29,1 L11,15 L20,15 L29,8z" fill="#7cc0f8"/></svg>
<div class="abs cpt" style="left:401px;top:221px">Brána<br>firewall</div>
<svg class="abs" style="left:545px;top:185px" width="32" height="32" viewBox="0 0 32 32"><circle cx="16" cy="16" r="12.500" fill="#fff"/><text x="16" y="22" text-anchor="middle" font-family="DejaVu Sans,sans-serif" font-weight="bold" font-style="italic" font-size="16" fill="#1a2a5c">IP</text>
<circle cx="16" cy="16" r="12.700" fill="none" stroke="#d8281c" stroke-width="3.600"/><path d="M7.500,7.500 L24.500,24.500" stroke="#d8281c" stroke-width="3.600"/></svg>
<div class="abs cpt" style="left:501px;top:221px">Automatický<br>blok</div>
<svg class="abs" style="left:645px;top:185px" width="32" height="32" viewBox="0 0 32 32"><rect x="1" y="3" width="30" height="25" rx="2" fill="url(#gSv)" stroke="#8e949b" stroke-width=".8"/><rect x="3.500" y="5.500" width="25" height="18" fill="#0d1b2e"/>
<path d="M6,9 l3,1.800 l-3,1.800" stroke="#7be04a" stroke-width="1.300" fill="none"/><rect x="10.500" y="11.500" width="5" height="1.400" fill="#7be04a"/><rect x="1" y="25" width="30" height="3" rx="1" fill="#aeb3b9"/></svg>
<div class="abs cpt" style="left:601px;top:221px">Terminál</div>
<svg class="abs" style="left:745px;top:185px" width="32" height="32" viewBox="0 0 32 32"><ellipse cx="15" cy="29" rx="9" ry="1.300" fill="#000" fill-opacity=".15"/>
<path d="M14,17 L14,5 A12,12 0 0 0 5.500,25.500z" fill="#5fc23a"/><path d="M14,17 L5.500,25.500 A12,12 0 0 0 21,26.800z" fill="#f3921e"/><path d="M14,17 L21,26.800 A12,12 0 0 0 26,17z" fill="#7b3fb8"/>
<path d="M17,14 L17,1.500 A12.500,12.500 0 0 1 29.500,10 z" fill="#39b6ee"/><path d="M17,14 L29.500,10 A12.500,12.500 0 0 1 29.500,14z" fill="#1f8fd0"/></svg>
<div class="abs cpt" style="left:701px;top:221px">SNMP</div>
<div class="abs cph" style="top:260px">Systém</div>
<div class="abs cpl" style="left:74px;top:267px;width:767px"></div>
<svg class="abs" style="left:45px;top:282px" width="32" height="32" viewBox="0 0 32 32"><path d="M6,14 v11 h20 v-11 l-10,-8z" fill="#f4f4f4" stroke="#b5b9bf" stroke-width=".6"/><path d="M16,2 L2,14.500 L5,16 L16,6.500 L27,16 L30,14.500z" fill="#2f74c8"/>
<rect x="9" y="16" width="4.500" height="5" fill="#2b3f5c"/><rect x="18.500" y="16" width="4.500" height="5" fill="#2b3f5c"/><rect x="14" y="18" width="4" height="7" fill="#d9dde2"/><path d="M16,25 v3" stroke="#8a8f96" stroke-width="2"/><rect x="4" y="27.500" width="24" height="2.600" rx="1.300" fill="#c9cdd2" stroke="#8f959c" stroke-width=".5"/><rect x="13" y="27" width="6" height="3.600" rx="1" fill="#3f8ee0"/></svg>
<div class="abs cpt" style="left:1px;top:318px">Síť</div>
<svg class="abs" style="left:145px;top:282px" width="32" height="32" viewBox="0 0 32 32"><g transform="translate(16,16) rotate(22.500)"><g fill="url(#gSv)" stroke="#878d94" stroke-width=".7"><path id="gt" d="M-3.200,-15.500 h6.400 l1.300,5.500 h-9z"/><path d="M-3.200,-15.500 h6.400 l1.300,5.500 h-9z" transform="rotate(45)"/><path d="M-3.200,-15.500 h6.400 l1.300,5.500 h-9z" transform="rotate(90)"/><path d="M-3.200,-15.500 h6.400 l1.300,5.500 h-9z" transform="rotate(135)"/><path d="M-3.200,-15.500 h6.400 l1.300,5.500 h-9z" transform="rotate(180)"/><path d="M-3.200,-15.500 h6.400 l1.300,5.500 h-9z" transform="rotate(225)"/><path d="M-3.200,-15.500 h6.400 l1.300,5.500 h-9z" transform="rotate(270)"/><path d="M-3.200,-15.500 h6.400 l1.300,5.500 h-9z" transform="rotate(315)"/><circle r="11.800"/></g>
<circle r="7.500" fill="#e9ecf0" stroke="#3c6fd0" stroke-width="1.600"/><circle r="3.800" fill="#b9bec5" stroke="#8a9098" stroke-width=".7"/></g></svg>
<div class="abs cpt" style="left:101px;top:318px">Nastavení DSM</div>
<svg class="abs" style="left:245px;top:282px" width="32" height="32" viewBox="0 0 32 32"><rect x="2" y="2" width="26" height="20" fill="#3f90dc" stroke="#d5d9de" stroke-width="1.600"/><path d="M4,5 q4,-2 7,0 q1,4 -2,6 q-2,3 -1,7 q-4,-3 -4,-13z M15,4 q5,-1 9,1 q1,5 -3,6 q-3,0 -4,-3z" fill="#63b634"/>
<circle cx="22" cy="21.500" r="9.200" fill="#1e1e1e"/><circle cx="22" cy="21.500" r="7.400" fill="#f7f7f7"/><path d="M22,21.500 v-5 M22,21.500 l4,2" stroke="#222" stroke-width="1.200" stroke-linecap="round"/></svg>
<div class="abs cpt" style="left:201px;top:318px">Místní<br>nastavení</div>
<svg class="abs" style="left:345px;top:282px" width="32" height="32" viewBox="0 0 32 32"><ellipse cx="16" cy="30" rx="8" ry="1.200" fill="#000" fill-opacity=".15"/><path d="M16,1 q15,0 15,11.500 q0,11.500 -15,11.500 q-2,0 -4,-0.500 q-3,3.500 -8,4.500 q3,-3 3,-6.500 q-6,-3 -6,-9 q0,-11.500 15,-11.500z" fill="url(#gNb)"/>
<ellipse cx="16" cy="7" rx="11" ry="5" fill="#fff" fill-opacity=".3"/><rect x="14.300" y="4.500" width="3.400" height="10.500" rx="1.700" fill="#fff"/><circle cx="16" cy="18.800" r="2" fill="#fff"/></svg>
<div class="abs cpt" style="left:301px;top:318px">Upozornění</div>
<svg class="abs" style="left:445px;top:282px" width="32" height="32" viewBox="0 0 32 32"><ellipse cx="16" cy="30.500" rx="6" ry="1" fill="#000" fill-opacity=".15"/><path d="M16,2 q9,0 9,9.500 q0,4 -3.500,8 q-1.500,2 -1.500,4 h-8 q0,-2 -1.500,-4 q-3.500,-4 -3.500,-8 q0,-9.500 9,-9.500z" fill="url(#gBu)" stroke="#f0b010" stroke-width=".6"/>
<rect x="12" y="23.500" width="8" height="4.500" rx="1" fill="#b9bdc3"/><path d="M12,25 h8 M12,26.500 h8" stroke="#80858c" stroke-width=".7"/><path d="M13.500,28 h5 l-1.200,2 h-2.600z" fill="#666"/><ellipse cx="13" cy="8" rx="3.500" ry="4" fill="#fff" fill-opacity=".6"/></svg>
<div class="abs cpt" style="left:401px;top:318px">Napájení</div>
<svg class="abs" style="left:545px;top:282px" width="32" height="32" viewBox="0 0 32 32"><path d="M6,1 h20 q1.500,0 1.800,1.500 l3,21 v5 q0,1.500 -1.500,1.500 h-26.600 q-1.500,0 -1.500,-1.500 v-5 l3,-21 q0.300,-1.500 1.800,-1.500z" fill="url(#gSv)" stroke="#959ba2" stroke-width=".7"/>
<rect x="1.500" y="24" width="29" height="5" rx="1" fill="#26292d"/><rect x="24" y="25.500" width="1.800" height="2" fill="#f2a21c"/><rect x="27" y="25.500" width="1.800" height="2" fill="#5fd03a"/><path d="M4,26.500 h17" stroke="#555" stroke-width="1.200" stroke-dasharray="1,1"/><g stroke="#1f8fe6" fill="#1f8fe6" stroke-width="1.700"><path d="M16,6 v13" fill="none"/><path d="M16,3 l2.500,3.500 h-5z" stroke="none"/><circle cx="16" cy="19" r="2.200" stroke="none"/><path d="M16,16 l-4,-3 v-2.500 M16,13.500 l4,-3 v-2" fill="none"/><circle cx="12" cy="10" r="1.600" stroke="none"/><rect x="18.600" y="6.500" width="2.800" height="2.800" stroke="none"/></g></svg>
<div class="abs cpt" style="left:501px;top:318px">Externí<br>zařízení</div>
<svg class="abs" style="left:645px;top:282px" width="32" height="32" viewBox="0 0 32 32"><ellipse cx="16" cy="30.500" rx="9" ry="1.200" fill="#000" fill-opacity=".15"/><circle cx="16" cy="15.500" r="14" fill="url(#gGr)"/><ellipse cx="16" cy="8" rx="10" ry="5.500" fill="#fff" fill-opacity=".22"/>
<path d="M11.500,11 A6.500,6.500 0 1 0 17,9.200" fill="none" stroke="#fff" stroke-width="2.300" stroke-linecap="round"/><path d="M18.500,5 v7.500 l-6,-3.700z" fill="#fff" transform="rotate(-8 16 9)"/></svg>
<div class="abs cpt" style="left:601px;top:318px">Obnovit výchozí<br>nastavení</div>
<svg class="abs" style="left:745px;top:282px" width="32" height="32" viewBox="0 0 32 32"><circle cx="16" cy="16" r="8.500" fill="url(#gGd2)"/><path d="M8,14 q8,-4 16,0 M8,19 q8,3 16,0 M16,7.500 q-5,8.500 0,17 M16,7.500 q5,8.500 0,17" stroke="#bfe0fa" stroke-width=".8" fill="none"/>
<path d="M9,27 A13.500,13.500 0 0 1 8,5.500" fill="none" stroke="#2a78d8" stroke-width="3.200"/><path d="M4,6 l8,-4 l-1,8z" fill="#2a78d8"/>
<path d="M23,5 A13.500,13.500 0 0 1 24,26.500" fill="none" stroke="#54b92c" stroke-width="3.200"/><path d="M28,26 l-8,4 l1,-8z" fill="#54b92c"/></svg>
<div class="abs cpt" style="left:701px;top:318px">Aktualizace<br>DSM</div>
<div class="abs cph" style="top:357px">Nastavení aplikace</div>
<div class="abs cpl" style="left:150px;top:364px;width:691px"></div>
<svg class="abs" style="left:45px;top:379px" width="32" height="32" viewBox="0 0 32 32"><rect x="1" y="2" width="24" height="23" rx="2.500" fill="url(#gOr)" stroke="#b85208" stroke-width=".8"/><path d="M1.500,7 v-2.500 q0,-2 2,-2 h19 q2,0 2,2 v2.500z" fill="#fdc37a"/>
<g fill="#fff"><path d="M8.500,6.500 l3.500,3.500 l-3.500,3.500 l-3.500,-3.500z"/><rect x="14.500" y="7" width="6.500" height="6" rx="1"/><rect x="5" y="15.500" width="6.500" height="6" rx="1"/><rect x="14.500" y="15.500" width="6.500" height="6" rx="1"/></g><path d="M21.500,19 v-3 a3.500,3.500 0 0 1 7,0 v3" fill="none" stroke="#a8adb4" stroke-width="2"/><rect x="19" y="18.500" width="12" height="12" rx="1.500" fill="#f2c84a" stroke="#a9801a" stroke-width=".7"/><path d="M19,24.500 h12 v3 h-12z" fill="#222"/><path d="M20.500,24.500 l2,3 M24,24.500 l2,3 M27.500,24.500 l2,3" stroke="#f2c84a" stroke-width="1.400"/></svg>
<div class="abs cpt" style="left:1px;top:415px">Oprávnění<br>aplikace</div>
<svg class="abs" style="left:145px;top:379px" width="32" height="32" viewBox="0 0 32 32"><rect x="1" y="2" width="24" height="23" rx="2.500" fill="url(#gOr)" stroke="#b85208" stroke-width=".8"/><path d="M1.500,7 v-2.500 q0,-2 2,-2 h19 q2,0 2,2 v2.500z" fill="#fdc37a"/>
<g fill="#fff"><path d="M8.500,6.500 l3.500,3.500 l-3.500,3.500 l-3.500,-3.500z"/><rect x="14.500" y="7" width="6.500" height="6" rx="1"/><rect x="5" y="15.500" width="6.500" height="6" rx="1"/><rect x="14.500" y="15.500" width="6.500" height="6" rx="1"/></g><path d="M16,27.500 q9,1 10.500,-7.500 l-3.500,1 l6,-8 l3,9 l-2.800,-1 q-2,11 -14,9z" fill="#58c832" stroke="#2f8a14" stroke-width=".6"/></svg>
<div class="abs cpt" style="left:101px;top:415px">Portál aplikací</div>
<svg class="abs" style="left:245px;top:379px" width="32" height="32" viewBox="0 0 32 32"><rect x="3" y="4" width="23" height="27" rx="2" fill="#b98a4e" stroke="#8a6030" stroke-width=".7" transform="rotate(-4 14 17)"/><rect x="5.500" y="7" width="18" height="21.500" fill="#fbfbf7" transform="rotate(-4 14 17)"/>
<rect x="9.500" y="1.500" width="9" height="5" rx="1" fill="#a9aeb5" stroke="#70757c" stroke-width=".6" transform="rotate(-4 14 4)"/>
<g stroke="#8a8f96" stroke-width="1.100"><path d="M11,12 h10 M11,16.500 h8 M11.500,21 h7"/></g><g fill="#d04a2a"><rect x="7" y="11" width="2.200" height="2.200"/><rect x="7.300" y="15.500" width="2.200" height="2.200"/><rect x="7.600" y="20" width="2.200" height="2.200"/></g>
<path d="M28,2 l3,2.500 l-12,17 l-4.500,2 l1,-4.500z" fill="#f2a12a" stroke="#a86612" stroke-width=".6"/><path d="M15.500,19 l3.500,2.500 l-4.500,2z" fill="#f5deb8"/><path d="M28,2 l3,2.500 l-1.800,2.500 l-3,-2.500z" fill="#e66a6a"/></svg>
<div class="abs cpt" style="left:201px;top:415px">Syslog</div>
<svg class="abs" style="left:345px;top:379px" width="32" height="32" viewBox="0 0 32 32"><rect x="1" y="3" width="30" height="26" rx="3.500" fill="url(#gFg)" stroke="#3c8a1c" stroke-width=".8"/><rect x="2" y="4" width="28" height="11" rx="3" fill="#fff" fill-opacity=".18"/>
<text x="16" y="21" text-anchor="middle" font-family="DejaVu Sans Condensed,DejaVu Sans,sans-serif" font-weight="bold" font-size="12.500" fill="#fff">VPN</text></svg>
<div class="abs cpt" style="left:301px;top:415px">VPN</div>
<svg class="abs" style="left:445px;top:379px" width="32" height="32" viewBox="0 0 32 32"><path d="M1,4.500 l22,-3.500 l4,25 l-22,3.500z" fill="#4a3b30"/><path d="M5.500,6.500 l13.500,-2.200 l1.600,10 l-13.500,2.200z" fill="#1fa8f0"/><path d="M7.300,17.500 l13.500,-2.200 l1.300,8 l-13.500,2.200z" fill="#1fa8f0"/>
<g fill="#e9e9e9"><rect x="21" y="3.500" width="1.600" height="2" transform="rotate(-8 22 4)"/><rect x="21.800" y="8.500" width="1.600" height="2" transform="rotate(-8 22 9)"/><rect x="22.600" y="13.500" width="1.600" height="2" transform="rotate(-8 23 14)"/><rect x="23.400" y="18.500" width="1.600" height="2" transform="rotate(-8 24 19)"/></g>
<g fill="#e9e9e9"><rect x="3" y="5.500" width="1.600" height="2" transform="rotate(-8 4 6)"/><rect x="3.800" y="10.500" width="1.600" height="2" transform="rotate(-8 4 11)"/><rect x="4.600" y="15.500" width="1.600" height="2" transform="rotate(-8 5 16)"/><rect x="5.400" y="20.500" width="1.600" height="2" transform="rotate(-8 6 21)"/></g>
<path d="M23,19.500 L30,27.500" stroke="#2a2a4a" stroke-width="2.600" stroke-linecap="round"/><circle cx="18" cy="13.500" r="6.800" fill="#e4f1fb" fill-opacity=".85" stroke="#b9c0c8" stroke-width="1.600"/><circle cx="18" cy="13.500" r="7.600" fill="none" stroke="#666f78" stroke-width=".6"/></svg>
<div class="abs cpt" style="left:401px;top:415px">Služba<br>indexování<br>médií</div>
<svg class="abs" style="left:545px;top:379px" width="32" height="32" viewBox="0 0 32 32"><g transform="translate(3.500,0) scale(.78)"><path d="M6,1 h20 q1.500,0 1.800,1.500 l3,21 v5 q0,1.500 -1.500,1.500 h-26.600 q-1.500,0 -1.500,-1.500 v-5 l3,-21 q0.300,-1.500 1.800,-1.500z" fill="url(#gSv)" stroke="#959ba2" stroke-width=".7"/>
<rect x="1.500" y="24" width="29" height="5" rx="1" fill="#26292d"/><rect x="24" y="25.500" width="1.800" height="2" fill="#f2a21c"/><rect x="27" y="25.500" width="1.800" height="2" fill="#5fd03a"/><path d="M4,26.500 h17" stroke="#555" stroke-width="1.200" stroke-dasharray="1,1"/></g><path d="M12.500,8.500 A5,5 0 1 0 17,7" fill="none" stroke="#2a86dc" stroke-width="1.900" stroke-linecap="round"/><path d="M18.500,4 v5.500 l-5,-2.500z" fill="#2a86dc"/><path d="M16,25 v3" stroke="#8a8f96" stroke-width="2"/><rect x="4" y="27.500" width="24" height="2.600" rx="1.300" fill="#c9cdd2" stroke="#8f959c" stroke-width=".5"/><rect x="13" y="27" width="6" height="3.600" rx="1" fill="#3f8ee0"/></svg>
<div class="abs cpt" style="left:501px;top:415px">Síťová<br>záloha</div>
</div><!-- RIGHT PANEL -->
<style>
#rp{left:1258px;top:148px;width:338px;height:936px;background:linear-gradient(125deg,#e3e9f2 0,#e8edf5 30%,#f0f3f8 45%,#e6ebf3 60%,#ebeff6 80%,#e4e9f2 100%);border-left:1px solid #f4f7fb;border-top:1px solid #f4f7fb;box-shadow:-1px -1px 3px rgba(0,20,60,.55)}
.wh{left:58px;font-weight:bold;color:#0b3b8c;font-size:11.700px;white-space:nowrap}
.wbx{left:11px;width:317px;height:137px;border:1px solid #3a5a82;border-radius:6px;background:linear-gradient(180deg,#f6f7fb 0,#eceef5 30%,#cfd2e3 70%,#b9bdd5 100%);box-shadow:inset 0 0 0 1px rgba(255,255,255,.55)}
.t{font-size:11.500px;white-space:nowrap}
</style>
<div class="abs" id="rp">
<svg class="abs" style="left:16px;top:15px" width="30" height="30" viewBox="0 0 28 28"><circle cx="14" cy="14" r="11.300" fill="#f1f4f9" stroke="#2a2a2a" stroke-width="2.500"/><path d="M14,7 v7" fill="none" stroke="#777" stroke-width="1.600"/><path d="M13.500,14.300 l6.500,-3" fill="none" stroke="#1c1c1c" stroke-width="1.600"/><g fill="#1c1c1c"><circle cx="6.500" cy="14" r="1"/><circle cx="21.500" cy="14" r="1"/><circle cx="14" cy="21.500" r="1"/><circle cx="14" cy="6.500" r="1"/></g></svg>
<div class="abs wh" style="top:22px">Plánovaná záloha</div>
<div class="abs wbx" style="top:50px"></div>
<svg class="abs" style="left:16px;top:195px" width="30" height="30" viewBox="0 0 28 28"><path d="M4,2.500 h12.500 l7,7 v16 h-19.500z" fill="#fff" stroke="#1c1c1c" stroke-width="2.400"/><path d="M16.500,2.500 v7 h7" fill="none" stroke="#1c1c1c" stroke-width="1.800"/><path d="M7.500,8.500 h5 M7.500,12.500 h5 M7.500,17 h12.500 M7.500,21.500 h12.500" stroke="#1c1c1c" stroke-width="2.200"/></svg>
<div class="abs wh" style="top:202px">Nedávné protokoly</div>
<div class="abs wbx" style="top:230px"></div>
<svg class="abs" style="left:16px;top:375px" width="30" height="30" viewBox="0 0 28 28"><path d="M2.500,5 v19 h24" fill="none" stroke="#1c1c1c" stroke-width="1.500"/><path d="M5.500,23 v-13 q2.500,-3 5,0 v13z M12.500,23 v-5 q2,-2 4,0 v5z M18.500,23 v-7 q2.200,-2 4.500,0 v7z" fill="#2a2a2a"/></svg>
<div class="abs wh" style="top:382px">Sledování zdrojů</div>
<div class="abs wbx" style="top:410px"></div>
<svg class="abs" style="left:16px;top:555px" width="30" height="30" viewBox="0 0 28 28"><path d="M13.500,2.500 q5.500,3 10.500,2.500 q1.500,13 -10.500,20.500 q-12,-7.500 -10.500,-20.500 q5,0.500 10.500,-2.500z" fill="#2b2b2b" stroke="#9a9a9a" stroke-width="1"/><path d="M4,6 q9.500,-3.500 19,0 q0,3 -1,5 q-8.500,-3 -17,0 q-1,-2 -1,-5z" fill="#fff" fill-opacity=".22"/><path d="M13.500,8 v11 M8,13.500 h11" stroke="#fff" stroke-width="3.400"/></svg>
<div class="abs wh" style="top:562px">Stav systému</div>
<div class="abs wbx" style="top:590px"></div>
<svg class="abs" style="left:16px;top:735px" width="30" height="30" viewBox="0 0 28 28"><g fill="none" stroke="#222" stroke-width="2.200"><rect x="4.500" y="6" width="11" height="6.500" rx="3.200" transform="rotate(35 10 9)"/><rect x="12.500" y="16" width="11" height="6.500" rx="3.200" transform="rotate(35 18 19)"/><path d="M11.500,11.500 l5.500,5.500" stroke-width="2.600"/></g></svg>
<div class="abs wh" style="top:742px">Aktuální připojení</div>
<div class="abs wbx" style="top:770px"></div>
<div class="abs" style="left:20px;top:59px;width:299px;height:60px;background:#f2f3f8"></div>
<div class="abs" style="left:20px;top:119px;width:299px;height:60px;background:#e2e4ea"></div>
<svg class="abs" style="left:32px;top:64px" width="22" height="20" viewBox="0 0 22 20"><g fill="none" stroke="#bcbcbc" stroke-width="2"><path d="M4,9 a7,7 0 0 1 13,-3"/><path d="M18,11 a7,7 0 0 1 -13,3"/></g><path d="M19.500,3 v5.500 h-5.500z M2.500,17 v-5.500 h5.500z" fill="#bcbcbc"/></svg>
<div class="abs t" style="left:65px;top:67px;font-weight:bold;color:#8d8d8d">Poslední záloha</div>
<div class="abs t" style="left:209px;width:100px;text-align:right;top:67px;color:#8d8d8d;letter-spacing:1px;margin-left:1px">--:--:--</div>
<div class="abs t" style="left:65px;top:86px;color:#8d8d8d;font-size:11.400px">Úloha: Nebyla naplánována žádná záloha.</div>
<svg class="abs" style="left:32px;top:124px" width="22" height="20" viewBox="0 0 22 20"><g fill="none" stroke="#bcbcbc" stroke-width="2"><path d="M4,9 a7,7 0 0 1 13,-3"/><path d="M18,11 a7,7 0 0 1 -13,3"/></g><path d="M19.500,3 v5.500 h-5.500z M2.500,17 v-5.500 h5.500z" fill="#bcbcbc"/></svg>
<div class="abs t" style="left:65px;top:127px;font-weight:bold;color:#8d8d8d">Další záloha</div>
<div class="abs t" style="left:209px;width:100px;text-align:right;top:127px;color:#8d8d8d;letter-spacing:1px;margin-left:1px">--:--:--</div>
<div class="abs t" style="left:65px;top:146px;color:#8d8d8d;font-size:11.400px">Úloha: Nebyla naplánována žádná záloha.</div>
<svg class="abs" style="left:33px;top:264px" width="14" height="9" viewBox="0 0 14 9"><path d="M2,7.500 l5,-5 l5,5" fill="none" stroke="#b4b4b4" stroke-width="2.400"/></svg>
<div class="abs t" style="left:20px;width:41px;text-align:center;top:288px;font-size:11.500px">1/5</div>
<svg class="abs" style="left:33px;top:314px" width="14" height="9" viewBox="0 0 14 9"><path d="M2,1.500 l5,5 l5,-5" fill="none" stroke="#222" stroke-width="2.400"/></svg>
<div class="abs" style="left:66px;top:239px;width:253px;height:24px;background:transparent"></div>
<svg class="abs" style="left:73px;top:243px" width="14" height="14" viewBox="0 0 14 14"><defs><radialGradient id="gi0" cx=".5" cy=".25" r=".8"><stop offset="0" stop-color="#7db9f2"/><stop offset="1" stop-color="#1c5fc2"/></radialGradient></defs><circle cx="7" cy="7" r="6.500" fill="url(#gi0)" stroke="#9cc0ea" stroke-width=".6"/><rect x="5.900" y="5.600" width="2.200" height="5.200" fill="#fff"/><circle cx="7" cy="3.600" r="1.300" fill="#fff"/></svg>
<div class="abs t" style="left:101px;top:243px;font-size:11.600px">CIFS client [admin] from [DESKTO...</div>
<div class="abs" style="left:66px;top:263px;width:253px;height:24px;background:#e2e4ea"></div>
<svg class="abs" style="left:73px;top:267px" width="14" height="14" viewBox="0 0 14 14"><defs><radialGradient id="gi1" cx=".5" cy=".25" r=".8"><stop offset="0" stop-color="#7db9f2"/><stop offset="1" stop-color="#1c5fc2"/></radialGradient></defs><circle cx="7" cy="7" r="6.500" fill="url(#gi1)" stroke="#9cc0ea" stroke-width=".6"/><rect x="5.900" y="5.600" width="2.200" height="5.200" fill="#fff"/><circle cx="7" cy="3.600" r="1.300" fill="#fff"/></svg>
<div class="abs t" style="left:101px;top:267px;font-size:11.600px">Access right of the shared folder [...</div>
<div class="abs" style="left:66px;top:287px;width:253px;height:24px;background:#f0f1f7"></div>
<svg class="abs" style="left:73px;top:291px" width="14" height="14" viewBox="0 0 14 14"><defs><radialGradient id="gi2" cx=".5" cy=".25" r=".8"><stop offset="0" stop-color="#7db9f2"/><stop offset="1" stop-color="#1c5fc2"/></radialGradient></defs><circle cx="7" cy="7" r="6.500" fill="url(#gi2)" stroke="#9cc0ea" stroke-width=".6"/><rect x="5.900" y="5.600" width="2.200" height="5.200" fill="#fff"/><circle cx="7" cy="3.600" r="1.300" fill="#fff"/></svg>
<div class="abs t" style="left:101px;top:291px;font-size:11.600px">Shared folder [Synology] was set t...</div>
<div class="abs" style="left:66px;top:311px;width:253px;height:24px;background:#e2e4ea"></div>
<svg class="abs" style="left:73px;top:315px" width="14" height="14" viewBox="0 0 14 14"><defs><radialGradient id="gi3" cx=".5" cy=".25" r=".8"><stop offset="0" stop-color="#7db9f2"/><stop offset="1" stop-color="#1c5fc2"/></radialGradient></defs><circle cx="7" cy="7" r="6.500" fill="url(#gi3)" stroke="#9cc0ea" stroke-width=".6"/><rect x="5.900" y="5.600" width="2.200" height="5.200" fill="#fff"/><circle cx="7" cy="3.600" r="1.300" fill="#fff"/></svg>
<div class="abs t" style="left:101px;top:315px;font-size:11.600px">Shared folder [Synology] was crea...</div>
<div class="abs" style="left:66px;top:335px;width:253px;height:24px;background:#f0f1f7"></div>
<svg class="abs" style="left:73px;top:339px" width="14" height="14" viewBox="0 0 14 14"><defs><radialGradient id="gi4" cx=".5" cy=".25" r=".8"><stop offset="0" stop-color="#7db9f2"/><stop offset="1" stop-color="#1c5fc2"/></radialGradient></defs><circle cx="7" cy="7" r="6.500" fill="url(#gi4)" stroke="#9cc0ea" stroke-width=".6"/><rect x="5.900" y="5.600" width="2.200" height="5.200" fill="#fff"/><circle cx="7" cy="3.600" r="1.300" fill="#fff"/></svg>
<div class="abs t" style="left:101px;top:339px;font-size:11.600px">System successfully created [Volu...</div>
<div class="abs" style="left:33px;top:423px;width:25px;height:91px;background:linear-gradient(100deg,#1d4160 0,#2f5878 45%,#143552 46%,#0f3050 100%);border:1px solid #0b1f33"></div><div class="abs" style="left:34px;top:432px;width:23px;height:2px;background:linear-gradient(180deg,#0a1c2e 50%,rgba(200,220,240,.28) 50%)"></div><div class="abs" style="left:34px;top:441px;width:23px;height:2px;background:linear-gradient(180deg,#0a1c2e 50%,rgba(200,220,240,.28) 50%)"></div><div class="abs" style="left:34px;top:450px;width:23px;height:2px;background:linear-gradient(180deg,#0a1c2e 50%,rgba(200,220,240,.28) 50%)"></div><div class="abs" style="left:34px;top:459px;width:23px;height:2px;background:linear-gradient(180deg,#0a1c2e 50%,rgba(200,220,240,.28) 50%)"></div><div class="abs" style="left:34px;top:468px;width:23px;height:2px;background:linear-gradient(180deg,#0a1c2e 50%,rgba(200,220,240,.28) 50%)"></div><div class="abs" style="left:34px;top:477px;width:23px;height:2px;background:linear-gradient(180deg,#0a1c2e 50%,rgba(200,220,240,.28) 50%)"></div><div class="abs" style="left:34px;top:486px;width:23px;height:2px;background:linear-gradient(180deg,#0a1c2e 50%,rgba(200,220,240,.28) 50%)"></div><div class="abs" style="left:34px;top:495px;width:23px;height:2px;background:linear-gradient(180deg,#0a1c2e 50%,rgba(200,220,240,.28) 50%)"></div><div class="abs" style="left:34px;top:504px;width:23px;height:2px;background:linear-gradient(180deg,#0a1c2e 50%,rgba(200,220,240,.28) 50%)"></div><div class="abs" style="left:34px;top:505px;width:23px;height:8px;background:#35a7f5"></div>
<div class="abs" style="left:74px;top:423px;width:25px;height:91px;background:linear-gradient(100deg,#1d4160 0,#2f5878 45%,#143552 46%,#0f3050 100%);border:1px solid #0b1f33"></div><div class="abs" style="left:75px;top:432px;width:23px;height:2px;background:linear-gradient(180deg,#0a1c2e 50%,rgba(200,220,240,.28) 50%)"></div><div class="abs" style="left:75px;top:441px;width:23px;height:2px;background:linear-gradient(180deg,#0a1c2e 50%,rgba(200,220,240,.28) 50%)"></div><div class="abs" style="left:75px;top:450px;width:23px;height:2px;background:linear-gradient(180deg,#0a1c2e 50%,rgba(200,220,240,.28) 50%)"></div><div class="abs" style="left:75px;top:459px;width:23px;height:2px;background:linear-gradient(180deg,#0a1c2e 50%,rgba(200,220,240,.28) 50%)"></div><div class="abs" style="left:75px;top:468px;width:23px;height:2px;background:linear-gradient(180deg,#0a1c2e 50%,rgba(200,220,240,.28) 50%)"></div><div class="abs" style="left:75px;top:477px;width:23px;height:2px;background:linear-gradient(180deg,#0a1c2e 50%,rgba(200,220,240,.28) 50%)"></div><div class="abs" style="left:75px;top:486px;width:23px;height:2px;background:linear-gradient(180deg,#0a1c2e 50%,rgba(200,220,240,.28) 50%)"></div><div class="abs" style="left:75px;top:495px;width:23px;height:2px;background:linear-gradient(180deg,#0a1c2e 50%,rgba(200,220,240,.28) 50%)"></div><div class="abs" style="left:75px;top:504px;width:23px;height:2px;background:linear-gradient(180deg,#0a1c2e 50%,rgba(200,220,240,.28) 50%)"></div><div class="abs" style="left:75px;top:508px;width:23px;height:5px;background:#35a7f5"></div>
<div class="abs t" style="left:26px;width:40px;text-align:center;top:522px;font-size:12px">CPU</div>
<div class="abs t" style="left:67px;width:40px;text-align:center;top:522px;font-size:12px">RAM</div>
<div class="abs" style="left:113px;width:50px;text-align:right;top:436px;font-size:10.800px;color:#555;line-height:12px">50000</div>
<div class="abs" style="left:113px;width:50px;text-align:right;top:451px;font-size:10.800px;color:#555;line-height:12px">40000</div>
<div class="abs" style="left:113px;width:50px;text-align:right;top:465px;font-size:10.800px;color:#555;line-height:12px">30000</div>
<div class="abs" style="left:113px;width:50px;text-align:right;top:480px;font-size:10.800px;color:#555;line-height:12px">20000</div>
<div class="abs" style="left:113px;width:50px;text-align:right;top:495px;font-size:10.800px;color:#555;line-height:12px">10000</div>
<div class="abs" style="left:113px;width:50px;text-align:right;top:509px;font-size:10.800px;color:#555;line-height:12px">0</div>
<svg class="abs" style="left:165px;top:425px" width="131" height="92" viewBox="0 0 131 92">
<defs><linearGradient id="gch" x1="0" y1="0" x2=".55" y2=".8"><stop offset="0" stop-color="#567791"/><stop offset="1" stop-color="#1b4263"/></linearGradient></defs>
<rect x="1" y="1" width="129" height="90" fill="#0e3251"/>
<path d="M1,1 H124 L1,54Z" fill="url(#gch)"/>
<rect x="1" y="1" width="129" height="90" fill="none" stroke="#55595f" stroke-width="2"/>
<path d="M2,89.500 H78 L89,9 L94,73 L100,89.500 H130" fill="none" stroke="#39a4ee" stroke-width="1.800"/>
<path d="M80,89.500 L89,88 L98,89.500" fill="none" stroke="#3fe03a" stroke-width="1.800"/>
</svg>
<svg class="abs" style="left:146px;top:523px" width="12" height="11" viewBox="0 0 13 12"><path d="M6.500,1 l5.500,5.500 h-3 v5 h-5 v-5 h-3z" fill="#2d9ff0" stroke="#1466b8" stroke-width=".6"/></svg>
<div class="abs t" style="left:159px;top:522px;font-size:12px">1 KB/s</div>
<svg class="abs" style="left:198px;top:523px" width="12" height="11" viewBox="0 0 13 12"><path d="M6.500,11.500 l5.500,-5.500 h-3 v-5 h-5 v5 h-3z" fill="#4cd83a" stroke="#2a9a1c" stroke-width=".6"/></svg>
<div class="abs t" style="left:211px;top:522px;font-size:12px">2 KB/s</div>
<svg class="abs" style="left:32px;top:627px" width="64" height="64" viewBox="0 0 64 64">
<defs><radialGradient id="gw" cx=".5" cy=".85" r=".9"><stop offset="0" stop-color="#ffc35a"/><stop offset=".45" stop-color="#f58a14"/><stop offset="1" stop-color="#d96a04"/></radialGradient><filter id="gwb"><feGaussianBlur stdDeviation="1.200"/></filter></defs>
<circle cx="32" cy="32" r="30" fill="#ffd88a" fill-opacity=".7" filter="url(#gwb)"/><circle cx="32" cy="32" r="28.500" fill="url(#gw)"/>
<ellipse cx="32" cy="19" rx="21" ry="14" fill="#fff" fill-opacity=".13"/>
<path d="M28.700,16 q3.300,-3 6.600,0 l-1.500,24 q-1.800,1.500 -3.600,0z" fill="#fff"/><circle cx="32" cy="47.500" r="3.600" fill="#fff"/></svg>
<div class="abs" style="left:121px;top:616px;color:#f36a10;font-size:16.500px;letter-spacing:1px">Pozor</div>
<div class="abs" style="left:121px;top:640px;color:#555;font-size:12.500px;line-height:14px;width:200px">Došlo k poruše svazku. Více informací naleznete v části „Správce úložiště“.</div>
<div class="abs t" style="left:121px;top:703px;font-size:12.500px;letter-spacing:.17px;color:#111">Doba provozu: 00:56:01</div>
<svg class="abs" style="left:33px;top:804px" width="14" height="9" viewBox="0 0 14 9"><path d="M2,7.500 l5,-5 l5,5" fill="none" stroke="#b4b4b4" stroke-width="2.400"/></svg>
<div class="abs t" style="left:20px;width:41px;text-align:center;top:828px;font-size:11.500px">1/1</div>
<svg class="abs" style="left:33px;top:854px" width="14" height="9" viewBox="0 0 14 9"><path d="M2,1.500 l5,5 l5,-5" fill="none" stroke="#b4b4b4" stroke-width="2.400"/></svg>
<div class="abs" style="left:66px;top:779px;width:253px;height:24px;background:#f0f1f7"></div>
<div class="abs" style="left:66px;top:803px;width:253px;height:24px;background:#e2e4ea"></div>
<div class="abs" style="left:66px;top:827px;width:253px;height:72px;background:#fff"></div>
<svg class="abs" style="left:73px;top:784px" width="14" height="14" viewBox="0 0 24 24"><path d="M12,1.500 c3.200,0 4.800,2.500 4.800,5.500 c0,2.600 -1.100,4.800 -2.500,5.900 v1.600 c3.200,1 6.700,2.300 7.400,8 h-19.400 c0.700,-5.700 4.200,-7 7.400,-8 v-1.600 c-1.400,-1.100 -2.500,-3.300 -2.500,-5.900 c0,-3 1.600,-5.500 4.800,-5.500z" fill="#555"/></svg>
<div class="abs t" style="left:90px;top:783px;font-size:11.300px">admin</div>
<div class="abs t" style="left:137px;top:783px;font-size:11.300px">CIFS</div>
<div class="abs t" style="left:191px;top:783px;font-size:11.300px">00:35:19</div>
<svg class="abs" style="left:293px;top:786px" width="16" height="12" viewBox="0 0 18 14"><path d="M2,10 l3,-6 l6,2 l-1,4 l-5,2z M6,4 l2,-3 M9,5 l2,-3" fill="#2a2a2a" stroke="#2a2a2a" stroke-width="1.200"/><path d="M1,12.500 l2.500,-2" stroke="#2a2a2a" stroke-width="1.500"/><circle cx="13.500" cy="9.500" r="2.800" fill="#fff" stroke="#d22" stroke-width="1.200"/><path d="M11.600,7.700 l3.800,3.600" stroke="#d22" stroke-width="1.100"/></svg>
<svg class="abs" style="left:73px;top:808px" width="14" height="14" viewBox="0 0 24 24"><path d="M12,1.500 c3.200,0 4.800,2.500 4.800,5.500 c0,2.600 -1.100,4.800 -2.500,5.900 v1.600 c3.200,1 6.700,2.300 7.400,8 h-19.400 c0.700,-5.700 4.200,-7 7.400,-8 v-1.600 c-1.400,-1.100 -2.500,-3.300 -2.500,-5.900 c0,-3 1.600,-5.500 4.800,-5.500z" fill="#555"/></svg>
<div class="abs t" style="left:90px;top:807px;font-size:11.300px">admin</div>
<div class="abs t" style="left:137px;top:807px;font-size:11.300px">HTTP</div>
<div class="abs t" style="left:191px;top:807px;font-size:11.300px">00:53:52</div>
<svg class="abs" style="left:293px;top:810px" width="16" height="12" viewBox="0 0 18 14"><path d="M2,10 l3,-6 l6,2 l-1,4 l-5,2z M6,4 l2,-3 M9,5 l2,-3" fill="#2a2a2a" stroke="#2a2a2a" stroke-width="1.200"/><path d="M1,12.500 l2.500,-2" stroke="#2a2a2a" stroke-width="1.500"/><circle cx="13.500" cy="9.500" r="2.800" fill="#fff" stroke="#d22" stroke-width="1.200"/><path d="M11.600,7.700 l3.800,3.600" stroke="#d22" stroke-width="1.100"/></svg>
<svg class="abs" style="left:267px;top:914px" width="70" height="22" viewBox="0 0 70 22"><path d="M0,22 L20,2 H70 V22z" fill="#f3f5fa" stroke="#cfd5e0" stroke-width="1"/><path d="M38,8 l6,6 l6,-6" fill="none" stroke="#222" stroke-width="2.600"/></svg>
</div>
<div class="abs" style="left:711px;top:1033px;white-space:nowrap;color:#fff;text-shadow:1px 1px 1px rgba(0,0,0,.5);line-height:30px;font-family:'Liberation Sans',sans-serif;font-weight:bold;font-size:24px;letter-spacing:-1.300px">Syno</div>
<div class="abs" style="left:764px;top:1033px;white-space:nowrap;color:#f1f5fb;text-shadow:1px 1px 1px rgba(0,0,0,.45);line-height:30px;font-family:'Liberation Serif',serif;font-size:25px;transform:scaleX(.8);transform-origin:0 0">logy</div>
<div class="abs" style="left:807px;top:1035px;white-space:nowrap;color:#d3d8e0;text-shadow:1px 1px 1px rgba(40,40,40,.75);line-height:30px;font-family:'DejaVu Sans',sans-serif;font-size:19px;letter-spacing:-.600px">DSM 4.1</div>
</body></html>
